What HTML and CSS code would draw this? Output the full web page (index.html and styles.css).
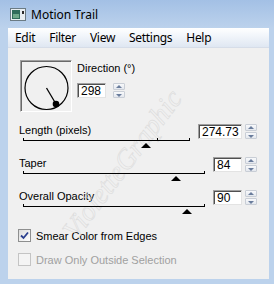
FILE: index.html
```html
<!DOCTYPE html>
<html>
<head>
<meta charset="utf-8">
<link rel="stylesheet" href="styles.css">
</head>
<body>
<div class="window">
  <div class="titlebar">
    <svg class="appicon" width="16" height="13" viewBox="0 0 16 13">
      <rect x="0.5" y="0.5" width="15" height="12" fill="#e8eef2" stroke="#6b7b84"/>
      <rect x="2" y="2" width="8" height="9" fill="#2f6b5a"/>
      <rect x="3" y="6" width="6" height="4" fill="#6fa88a"/>
      <rect x="12" y="3" width="2" height="3" fill="#2b2b2b"/>
    </svg>
    <span class="title">Motion Trail</span>
  </div>
  <div class="client">
    <div class="menubar">
      <span>Edit</span><span>Filter</span><span>View</span><span>Settings</span><span>Help</span>
    </div>
    <div class="content">
      <div class="watermark">VioletteGraphic</div>
      <div class="dir-row">
        <div class="dial">
          <svg width="50" height="50" viewBox="0 0 50 50">
            <circle cx="25.5" cy="27" r="21.5" fill="none" stroke="#000" stroke-width="1.2"/>
            <line x1="25.5" y1="27" x2="35" y2="43" stroke="#000" stroke-width="1.3"/>
            <circle cx="35" cy="43" r="3.3" fill="#000"/>
          </svg>
        </div>
        <div class="dir-col">
          <div class="lbl">Direction (°)</div>
          <div class="ctrl">
            <div class="edit w29">298</div>
            <div class="spin"><span class="up"></span><span class="dn"></span></div>
          </div>
        </div>
      </div>

      <div class="srow">
        <div class="sl">
          <div class="lbl">Length (pixels)</div>
          <div class="track">
            <span class="tick" style="left:0%"></span>
            <span class="tick" style="left:80%"></span>
            <span class="tick end"></span>
            <span class="thumb" style="left:73.4%"></span>
          </div>
        </div>
        <div class="edit w44">274.73</div>
        <div class="spin"><span class="up"></span><span class="dn"></span></div>
      </div>

      <div class="srow">
        <div class="sl">
          <div class="lbl">Taper</div>
          <div class="track">
            <span class="tick" style="left:0%"></span>
            <span class="tick end"></span>
            <span class="thumb" style="left:84%"></span>
          </div>
        </div>
        <div class="edit w29">84</div>
        <div class="spin"><span class="up"></span><span class="dn"></span></div>
      </div>

      <div class="srow">
        <div class="sl">
          <div class="lbl">Overall Opacity</div>
          <div class="track">
            <span class="tick" style="left:0%"></span>
            <span class="tick end"></span>
            <span class="thumb" style="left:90%"></span>
          </div>
        </div>
        <div class="edit w29">90</div>
        <div class="spin"><span class="up"></span><span class="dn"></span></div>
      </div>

      <label class="chk">
        <span class="box checked">
          <svg width="9" height="9" viewBox="0 0 9 9"><path d="M1 4.5 L3.5 7 L8 1.5" fill="none" stroke="#2a3f8f" stroke-width="1.8"/></svg>
        </span>
        <span>Smear Color from Edges</span>
      </label>
      <label class="chk disabled">
        <span class="box"></span>
        <span>Draw Only Outside Selection</span>
      </label>
    </div>
  </div>
</div>
</body>
</html>
```

FILE: styles.css
```css
html, body {
  margin: 0;
  padding: 0;
}
body {
  width: 274px;
  height: 284px;
  overflow: hidden;
}
.window {
  width: 274px;
  height: 284px;
  box-sizing: border-box;
  background: #bcd2ec;
  display: flex;
  flex-direction: column;
}
.titlebar {
  height: 28px;
  flex: none;
  display: flex;
  align-items: center;
  padding-left: 10px;
  gap: 5px;
  background: linear-gradient(#a3c0e5, #bcd2ec);
}
.appicon {
  display: block;
  margin-top: 1px;
}
.title {
  font-family: "Noto Sans", sans-serif;
  font-size: 12px;
  color: #000;
  margin-top: 1px;
}
.client {
  flex: 1;
  margin: 0 5px 5px 8px;
  background: #f0f0f0;
  display: flex;
  flex-direction: column;
}
.menubar {
  height: 19px;
  flex: none;
  display: flex;
  align-items: center;
  gap: 14px;
  padding-left: 7px;
  font-family: "Noto Sans", sans-serif;
  font-size: 12px;
  letter-spacing: -0.3px;
  background: linear-gradient(#ffffff, #f5f8fc 30%, #dfe7f2);
  border-bottom: 1px solid #d6dde8;
}
.content {
  position: relative;
  flex: 1;
  padding: 12px 12px 0 11px;
  font-family: "Liberation Sans", Arial, sans-serif;
  font-size: 11px;
  color: #000;
  overflow: hidden;
}
.watermark {
  position: absolute;
  left: 72px;
  top: 168px;
  height: 28px;
  line-height: 28px;
  transform: rotate(-53deg);
  transform-origin: 0 100%;
  font-family: "Liberation Serif", serif;
  font-style: italic;
  font-size: 28px;
  color: transparent;
  -webkit-text-stroke: 0.6px #dcdcdc;
  white-space: nowrap;
  pointer-events: none;
}
.dir-row {
  display: flex;
  gap: 5px;
  margin-left: 1px;
  height: 52px;
}
.dial {
  width: 52px;
  height: 52px;
  box-sizing: border-box;
  border-top: 1px solid #a0a0a0;
  border-left: 1px solid #a0a0a0;
  border-right: 1px solid #ffffff;
  border-bottom: 1px solid #ffffff;
  box-shadow: inset 1px 1px 0 #696969;
  background: #f0f0f0;
}
.dial svg {
  display: block;
}
.dir-col {
  display: flex;
  flex-direction: column;
  padding-top: 2px;
}
.lbl {
  height: 13px;
  line-height: 13px;
  white-space: nowrap;
}
.ctrl {
  display: flex;
  margin-top: 8px;
  gap: 4px;
}
.edit {
  height: 15px;
  box-sizing: border-box;
  background: #fff;
  border-top: 1px solid #a0a0a0;
  border-left: 1px solid #a0a0a0;
  border-right: 1px solid #e3e3e3;
  border-bottom: 1px solid #e3e3e3;
  box-shadow: inset 1px 1px 0 #505050;
  padding: 1px 0 0 3px;
  line-height: 12px;
  font-size: 12px;
  flex: none;
  white-space: nowrap;
}
.w29 { width: 29px; }
.w44 { width: 44px; }
.spin {
  width: 12px;
  height: 15px;
  display: flex;
  flex-direction: column;
  gap: 1px;
  flex: none;
  margin-left: 3px;
}
.spin span {
  flex: 1;
  position: relative;
  background: linear-gradient(#f8f9fb, #e4e8ee);
  border: 1px solid #c9ced6;
  border-radius: 1px;
}
.spin span::after {
  content: "";
  position: absolute;
  left: 50%;
  top: 50%;
  margin-left: -3px;
  border-left: 3px solid transparent;
  border-right: 3px solid transparent;
}
.spin .up::after {
  margin-top: -2px;
  border-bottom: 3px solid #6a7d9c;
}
.spin .dn::after {
  margin-top: -1px;
  border-top: 3px solid #6a7d9c;
}
.srow {
  display: flex;
  align-items: flex-start;
  height: 33px;
}
.dir-row + .srow { margin-top: 12px; }
.sl {
  flex: 1;
  display: flex;
  flex-direction: column;
  margin-right: 8px;
}
.track {
  position: relative;
  height: 1px;
  background: #000;
  margin: 3px 0 0 4px;
}
.tick {
  position: absolute;
  top: -2px;
  width: 1px;
  height: 3px;
  background: #000;
}
.tick.end {
  right: 0;
}
.thumb {
  position: absolute;
  top: 3px;
  margin-left: -5px;
  width: 0;
  height: 0;
  border-left: 5px solid transparent;
  border-right: 5px solid transparent;
  border-bottom: 5px solid #000;
}
.chk {
  display: flex;
  align-items: center;
  gap: 5px;
  height: 13px;
  margin-left: -1px;
  white-space: nowrap;
}
.chk + .chk { margin-top: 11px; }
.srow + .chk { margin-top: 6px; }
.box {
  width: 13px;
  height: 13px;
  box-sizing: border-box;
  border: 1px solid #8e8f8f;
  background: linear-gradient(135deg, #dcdcdc, #ffffff);
  display: flex;
  align-items: center;
  justify-content: center;
  flex: none;
}
.box svg { display: block; }
.disabled { color: #a0a0a0; }
.disabled .box {
  border-color: #c4c4c4;
  background: #f4f4f4;
}
```
